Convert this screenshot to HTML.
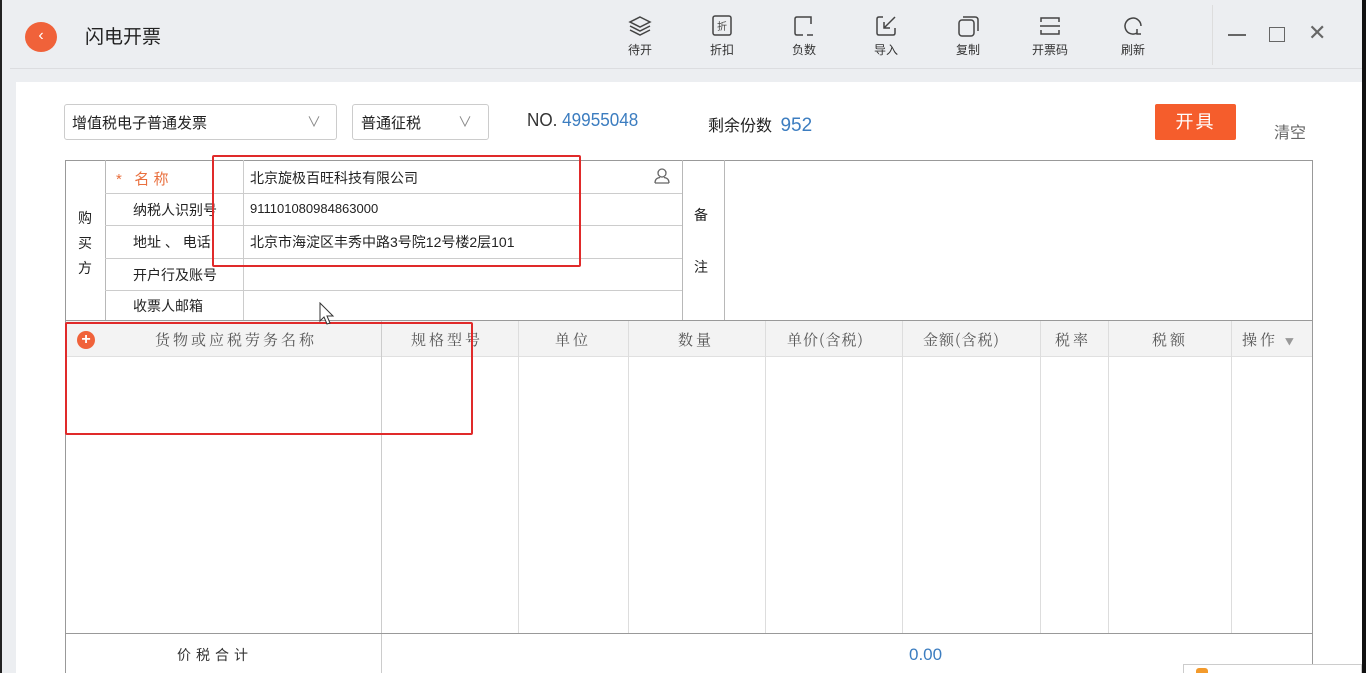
<!DOCTYPE html>
<html><head><meta charset="utf-8"><style>
*{margin:0;padding:0;box-sizing:border-box}
html{height:673px;overflow:hidden}
body{width:1366px;height:673px;overflow:hidden;background:#eceef1;font-family:"Liberation Sans","Noto Sans CJK SC",sans-serif;position:relative;color:#333}
.a{position:absolute}
.tb{font-size:12px;color:#333;text-align:center;width:50px}
.tb svg{display:block;margin:0 auto 3px}
.line{position:absolute;background:#b8b8b8}
.t{position:absolute;font-size:14px;color:#222;white-space:nowrap}
.h{position:absolute;font-size:15px;color:#555;font-family:"Noto Serif CJK SC",serif;letter-spacing:3px;top:329px;white-space:nowrap}
</style></head><body>
<div class="a" style="left:0;top:0;width:2px;height:673px;background:#222"></div>
<div class="a" style="right:0;top:0;width:4px;height:673px;background:#111"></div>
<div class="a" style="left:25px;top:22px;width:32px;height:30px;border-radius:50%;background:#f0623a;color:#fff;font-size:16px;text-align:center;line-height:28px">‹</div>
<div class="t" style="left:85px;top:22px;font-size:19px;color:#222">闪电开票</div>
<div class="a tb" style="left:615px;top:14px"><svg width="26" height="24" viewBox="0 0 26 24" fill="none" stroke="#444" stroke-width="1.5"><path d="M13 3 L23 8 13 13 3 8Z"/><path d="M3 12 L13 17 23 12"/><path d="M3 16 L13 21 23 16"/></svg>待开</div>
<div class="a tb" style="left:697px;top:14px"><svg width="26" height="24" viewBox="0 0 26 24" fill="none" stroke="#444" stroke-width="1.5"><rect x="4" y="2" width="18" height="19" rx="2"/><text x="13" y="16" font-size="10" text-anchor="middle" fill="#444" stroke="none">折</text></svg>折扣</div>
<div class="a tb" style="left:779px;top:14px"><svg width="26" height="24" viewBox="0 0 26 24" fill="none" stroke="#444" stroke-width="1.5"><path d="M20 10V3H6Q4 3 4 5V19Q4 21 6 21H12"/><path d="M16 21H22"/></svg>负数</div>
<div class="a tb" style="left:861px;top:14px"><svg width="26" height="24" viewBox="0 0 26 24" fill="none" stroke="#444" stroke-width="1.5"><path d="M10 3H6Q4 3 4 5V19Q4 21 6 21H20Q22 21 22 19V14"/><path d="M22 3L11 14M11 8V14H17"/></svg>导入</div>
<div class="a tb" style="left:943px;top:14px"><svg width="26" height="24" viewBox="0 0 26 24" fill="none" stroke="#444" stroke-width="1.5"><rect x="4" y="6" width="15" height="16" rx="3"/><path d="M8 3H20Q23 3 23 6V17"/></svg>复制</div>
<div class="a tb" style="left:1025px;top:14px"><svg width="26" height="24" viewBox="0 0 26 24" fill="none" stroke="#444" stroke-width="1.5"><path d="M4 8V4H22V8M4 16V20H22V16M3 12H23"/></svg>开票码</div>
<div class="a tb" style="left:1108px;top:14px"><svg width="26" height="24" viewBox="0 0 26 24" fill="none" stroke="#444" stroke-width="1.5"><path d="M17 19A8 8 0 1 1 21 12"/><path d="M17 15V20H21"/></svg>刷新</div>
<div class="a" style="left:1212px;top:5px;width:1px;height:60px;background:#ddd"></div>
<div class="a" style="left:1228px;top:34px;width:18px;height:1.5px;background:#666"></div>
<div class="a" style="left:1269px;top:27px;width:16px;height:15px;border:1.5px solid #666"></div>
<div class="t" style="left:1308px;top:20px;font-size:22px;color:#666">✕</div>
<div class="a" style="left:10px;top:68px;width:1352px;height:1px;background:#dcdde0"></div>
<div class="a" style="left:16px;top:82px;width:1346px;height:591px;background:#fff"></div>

<div class="a" style="left:64px;top:104px;width:273px;height:36px;border:1px solid #ccc;border-radius:3px"></div>
<div class="t" style="left:72px;top:112px;font-size:15px">增值税电子普通发票</div>
<div class="t" style="left:307px;top:112px;color:#888">∨</div>
<div class="a" style="left:352px;top:104px;width:137px;height:36px;border:1px solid #ccc;border-radius:3px"></div>
<div class="t" style="left:361px;top:112px;font-size:15px">普通征税</div>
<div class="t" style="left:458px;top:112px;color:#888">∨</div>
<div class="t" style="left:527px;top:110px;font-size:18px;color:#333;transform:scaleX(0.95);transform-origin:left">NO. <span style="color:#3c7dc0">49955048</span></div>
<div class="t" style="left:708px;top:112px;font-size:16px">剩余份数 <span style="color:#3c7dc0;font-size:19px;margin-left:4px">952</span></div>
<div class="a" style="left:1155px;top:104px;width:81px;height:36px;background:#f55d2c;border-radius:2px;color:#fff;font-size:18px;text-align:center;line-height:36px;letter-spacing:2px">开具</div>
<div class="t" style="left:1274px;top:119px;font-size:16px;color:#666">清空</div>

<div class="a" style="left:65px;top:160px;width:1248px;height:520px;border:1px solid #999;border-bottom:none"></div>
<div class="line" style="left:105px;top:160px;width:1px;height:160px"></div>
<div class="line" style="left:243px;top:160px;width:1px;height:160px;background:#ccc"></div>
<div class="line" style="left:682px;top:160px;width:1px;height:160px"></div>
<div class="line" style="left:724px;top:160px;width:1px;height:160px"></div>
<div class="line" style="left:105px;top:193px;width:577px;height:1px;background:#ccc"></div>
<div class="line" style="left:105px;top:225px;width:577px;height:1px;background:#ccc"></div>
<div class="line" style="left:105px;top:258px;width:577px;height:1px;background:#ccc"></div>
<div class="line" style="left:105px;top:290px;width:577px;height:1px;background:#ccc"></div>
<div class="line" style="left:65px;top:320px;width:1248px;height:1px;background:#999"></div>
<div class="t" style="left:78px;top:206px;line-height:25px;white-space:normal;width:16px">购买方</div>
<div class="t" style="left:694px;top:205px">备</div>
<div class="t" style="left:694px;top:257px">注</div>
<div class="t" style="left:116px;top:168px;color:#e9703f;font-size:15px">*&nbsp;&nbsp;&nbsp;名 称</div>
<div class="t" style="left:133px;top:200px">纳税人识别号</div>
<div class="t" style="left:133px;top:232px">地址 、 电话</div>
<div class="t" style="left:133px;top:265px">开户行及账号</div>
<div class="t" style="left:133px;top:296px">收票人邮箱</div>
<div class="t" style="left:250px;top:168px">北京旋极百旺科技有限公司</div>
<div class="t" style="left:250px;top:201px;font-size:13px">911101080984863000</div>
<div class="t" style="left:250px;top:232px">北京市海淀区丰秀中路3号院12号楼2层101</div>
<svg class="a" style="left:653px;top:167px" width="18" height="18" viewBox="0 0 18 18" fill="none" stroke="#666" stroke-width="1.3"><circle cx="9" cy="6" r="4"/><path d="M2 16Q2 11 7 10.5M16 16Q16 11 11 10.5M2 16H16"/></svg>

<div class="a" style="left:66px;top:321px;width:1246px;height:36px;background:#f3f3f3;border-bottom:1px solid #e0e0e0"></div>
<div class="a" style="left:77px;top:331px;width:18px;height:18px;border-radius:50%;background:#f0623a;color:#fff;font-size:16px;font-weight:bold;text-align:center;line-height:18px">+</div>
<div class="line" style="left:381px;top:321px;width:1px;height:352px;background:#ccc"></div>
<div class="line" style="left:518px;top:321px;width:1px;height:312px;background:#ddd"></div>
<div class="line" style="left:628px;top:321px;width:1px;height:312px;background:#ddd"></div>
<div class="line" style="left:765px;top:321px;width:1px;height:312px;background:#ddd"></div>
<div class="line" style="left:902px;top:321px;width:1px;height:312px;background:#ddd"></div>
<div class="line" style="left:1040px;top:321px;width:1px;height:312px;background:#ddd"></div>
<div class="line" style="left:1108px;top:321px;width:1px;height:312px;background:#ddd"></div>
<div class="line" style="left:1231px;top:321px;width:1px;height:312px;background:#ddd"></div>
<div class="h" style="left:155px">货物或应税劳务名称</div>
<div class="h" style="left:411px">规格型号</div>
<div class="h" style="left:555px">单位</div>
<div class="h" style="left:678px">数量</div>
<div class="h" style="left:787px;letter-spacing:1px">单价(含税)</div>
<div class="h" style="left:923px;letter-spacing:1px">金额(含税)</div>
<div class="h" style="left:1055px">税率</div>
<div class="h" style="left:1152px">税额</div>
<div class="h" style="left:1242px">操作 <span style="font-size:9px;color:#999">▼</span></div>
<div class="line" style="left:65px;top:633px;width:1248px;height:1px;background:#999"></div>
<div class="t" style="left:177px;top:645px;letter-spacing:5px;color:#333">价税合计</div>
<div class="t" style="left:909px;top:645px;font-size:17px;color:#3c7dc0">0.00</div>
<div class="a" style="left:1183px;top:664px;width:179px;height:9px;background:#fff;border:1px solid #ccc;border-bottom:none"></div>
<div class="a" style="left:1196px;top:668px;width:12px;height:5px;background:#f39a2b;border-radius:3px 3px 0 0"></div>

<div class="a" style="left:212px;top:155px;width:369px;height:112px;border:2px solid #e02a2a;border-radius:2px"></div>
<div class="a" style="left:65px;top:322px;width:408px;height:113px;border:2px solid #e02a2a;border-radius:2px"></div>
<svg class="a" style="left:318px;top:302px" width="18" height="24" viewBox="0 0 18 24"><path d="M2 1V19L6 15L9 22L12 21L9 14H15Z" fill="#fff" stroke="#333" stroke-width="1"/></svg>
</body></html>
